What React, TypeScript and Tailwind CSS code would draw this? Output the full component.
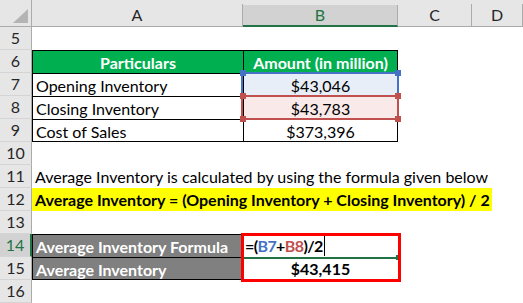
const hdrCol = "bg-[#E6E6E6] border-b border-[#ABABAB] flex flex-col justify-end";
const hdrInner = "h-[22px] border-r border-[#ABABAB] flex items-center justify-center text-[#262626]";
const rowHdr = "bg-[#E6E6E6] border-r border-[#ABABAB] border-b border-b-[#D4D4D4] flex items-center justify-center text-[#262626]";
const cell = "leading-[23px] whitespace-nowrap";

function RowHead({ n, active = false }: { n: number; active?: boolean }) {
  if (active) {
    return (
      <div className="bg-[#D2D2D2] border-r-2 border-[#217346] border-b border-b-[#D4D4D4] flex items-center justify-center text-[#217346]">
        {n}
      </div>
    );
  }
  return <div className={rowHdr}>{n}</div>;
}

export default function App() {
  return (
    <div className="relative w-[523px] h-[303px] overflow-hidden bg-white font-[Lato,sans-serif] text-[16px] text-black">
      <div className="grid grid-cols-[32px_211px_155px_74px_51px] grid-rows-[27px_repeat(12,23px)]">
        {/* header row */}
        <div className="bg-[#E6E6E6] border-b border-r border-[#ABABAB] flex items-end justify-end pr-[3px] pb-[3px]">
          <svg width="15" height="14" viewBox="0 0 15 14">
            <polygon points="15,0 15,14 0,14" fill="#B4B4B4" />
          </svg>
        </div>
        <div className={hdrCol}>
          <div className={hdrInner}>A</div>
        </div>
        <div className="bg-[#E6E6E6] flex flex-col justify-end">
          <div className="h-[22px] bg-[#D2D2D2] border-r border-[#ABABAB] border-b-2 border-b-[#217346] flex items-center justify-center text-[#217346]">
            B
          </div>
        </div>
        <div className={hdrCol}>
          <div className={hdrInner}>C</div>
        </div>
        <div className={hdrCol}>
          <div className={hdrInner}>D</div>
        </div>

        {/* row 5 */}
        <RowHead n={5} />
        <div className="col-span-4" />

        {/* row 6 */}
        <RowHead n={6} />
        <div className={`${cell} bg-[#00B050] border-l border-t border-black text-center font-bold text-white`}>Particulars</div>
        <div className={`${cell} bg-[#00B050] border-l border-r border-t border-black text-center font-bold text-white`}>Amount (in million)</div>
        <div className="col-span-2" />

        {/* row 7 */}
        <RowHead n={7} />
        <div className={`${cell} border-l border-t border-black pl-[3px]`}>Opening Inventory</div>
        <div className={`${cell} bg-[#E8EEF8] border-l border-r border-t border-black text-center`}>$43,046</div>
        <div className="col-span-2" />

        {/* row 8 */}
        <RowHead n={8} />
        <div className={`${cell} border-l border-t border-black pl-[3px]`}>Closing Inventory</div>
        <div className={`${cell} bg-[#F9E9E9] border-l border-r border-t border-black text-center`}>$43,783</div>
        <div className="col-span-2" />

        {/* row 9 */}
        <RowHead n={9} />
        <div className={`${cell} border-l border-t border-b border-black pl-[3px]`}>Cost of Sales</div>
        <div className={`${cell} border-l border-r border-t border-b border-black text-center`}>$373,396</div>
        <div className="col-span-2" />

        {/* row 10 */}
        <RowHead n={10} />
        <div className="col-span-4" />

        {/* row 11 */}
        <RowHead n={11} />
        <div className={`${cell} col-span-4 pl-[3px]`}>Average Inventory is calculated by using the formula given below</div>

        {/* row 12 */}
        <RowHead n={12} />
        <div className="col-span-4 flex">
          <div className={`${cell} w-[460px] bg-[#FFFF00] pl-[3px] font-bold`}>
            Average Inventory = (Opening Inventory + Closing Inventory) / 2
          </div>
        </div>

        {/* row 13 */}
        <RowHead n={13} />
        <div className="col-span-4" />

        {/* row 14 */}
        <RowHead n={14} active />
        <div className={`${cell} bg-[#808080] border-l border-t border-black pl-[3px] font-bold text-white`}>Average Inventory Formula</div>
        <div className="flex items-center pl-[2px] font-bold">
          <span className="leading-[20px] whitespace-nowrap tracking-[-0.6px] border-r border-black pr-[1px]">
            =(<span className="text-[#4472C4]">B7</span>+<span className="text-[#C0504D]">B8</span>)/2
          </span>
        </div>
        <div className="col-span-2" />

        {/* row 15 */}
        <RowHead n={15} />
        <div className={`${cell} bg-[#808080] border-l border-t border-b border-black pl-[3px] font-bold text-white`}>Average Inventory</div>
        <div className={`${cell} text-center font-bold`}>$43,415</div>
        <div className="col-span-2" />

        {/* row 16 */}
        <RowHead n={16} />
        <div className="col-span-4" />
      </div>

      {/* range reference highlights */}
      <div className="absolute left-[241px] top-[72px] w-[158px] h-[25px] border-2 border-[#4472C4]" />
      <div className="absolute left-[241px] top-[95px] w-[158px] h-[25px] border-2 border-[#C0504D]" />
      <div className="absolute left-[240px] top-[70px] w-[6px] h-[6px] bg-[#4472C4]" />
      <div className="absolute left-[395px] top-[70px] w-[6px] h-[6px] bg-[#4472C4]" />
      <div className="absolute left-[240px] top-[93px] w-[6px] h-[6px] bg-[#C0504D]" />
      <div className="absolute left-[395px] top-[93px] w-[6px] h-[6px] bg-[#C0504D]" />
      <div className="absolute left-[240px] top-[116px] w-[6px] h-[6px] bg-[#C0504D]" />
      <div className="absolute left-[395px] top-[116px] w-[6px] h-[6px] bg-[#C0504D]" />

      {/* active cell edit indicator */}
      <div className="absolute left-[243px] top-[257px] w-[155px] h-[2px] bg-[#217346]" />
      <div className="absolute left-[396px] top-[255px] w-[5px] h-[5px] bg-[#217346]" />

      {/* red outline */}
      <div className="absolute left-[241px] top-[233px] w-[160px] h-[49px] border-[3px] border-[#FF0000]" />
    </div>
  );
}
